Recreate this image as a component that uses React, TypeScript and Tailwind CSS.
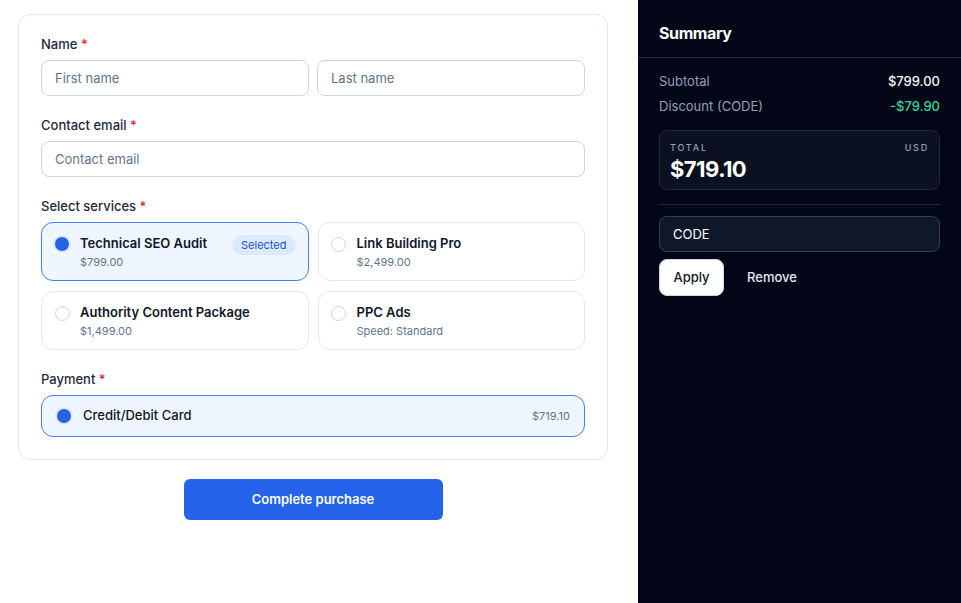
import { useState } from "react";

const SERVICES = [
  { id: "seo", name: "Technical SEO Audit", sub: "$799.00" },
  { id: "links", name: "Link Building Pro", sub: "$2,499.00" },
  { id: "content", name: "Authority Content Package", sub: "$1,499.00" },
  { id: "ppc", name: "PPC Ads", sub: "Speed: Standard" },
];

function Label({ children }: { children: React.ReactNode }) {
  return (
    <div className="text-[13px] font-medium text-[#1e293b] leading-5 mb-[6px]">
      {children} <span className="text-[#dc2626]">*</span>
    </div>
  );
}

function Radio({ on }: { on: boolean }) {
  return on ? (
    <span className="w-[18px] h-[18px] rounded-full bg-[#dbeafe] flex items-center justify-center shrink-0">
      <span className="w-[14px] h-[14px] rounded-full bg-[#2563eb]" />
    </span>
  ) : (
    <span className="w-[18px] h-[18px] flex items-center justify-center shrink-0">
      <span className="w-[15px] h-[15px] rounded-full border border-slate-300 bg-white" />
    </span>
  );
}

export default function App() {
  const [picked, setPicked] = useState("seo");

  return (
    <div className="flex w-[961px] h-[603px] bg-white" style={{ fontFamily: "Inter, 'Liberation Sans', sans-serif" }}>
      <div className="w-[638px] shrink-0 pl-[18px] pt-[14px]">
        <div className="w-[590px] border border-slate-200 rounded-xl px-[22px] pt-[19px] pb-[22px]">
          <Label>Name</Label>
          <div className="grid grid-cols-2 gap-2">
            <input
              placeholder="First name"
              className="h-[36px] rounded-lg border border-slate-300 px-[13px] text-[13px] text-slate-900 placeholder:text-slate-500 outline-none"
            />
            <input
              placeholder="Last name"
              className="h-[36px] rounded-lg border border-slate-300 px-[13px] text-[13px] text-slate-900 placeholder:text-slate-500 outline-none"
            />
          </div>

          <div className="mt-[19px]">
            <Label>Contact email</Label>
            <input
              placeholder="Contact email"
              className="w-full h-[36px] rounded-lg border border-slate-300 px-[13px] text-[13px] text-slate-900 placeholder:text-slate-500 outline-none"
            />
          </div>

          <div className="mt-[19px]">
            <Label>Select services</Label>
            <div className="grid grid-cols-2 gap-x-[9px] gap-y-[10px]">
              {SERVICES.map((s) => {
                const on = picked === s.id;
                return (
                  <button
                    key={s.id}
                    onClick={() => setPicked(s.id)}
                    className={`h-[59px] rounded-xl border text-left flex items-start gap-[9px] pl-[11px] pr-[12px] pt-[10px] ${
                      on ? "border-[#3b82f6] bg-[#eff6ff]" : "border-slate-200 bg-white"
                    }`}
                  >
                    <span className="mt-[2px]">
                      <Radio on={on} />
                    </span>
                    <span className="flex-1 min-w-0">
                      <span className="block text-[13px] font-semibold text-slate-900 leading-5">{s.name}</span>
                      <span className="block text-[11px] text-slate-500 leading-4 mt-[1px]">{s.sub}</span>
                    </span>
                    {on && (
                      <span className="mt-[2px] rounded-full bg-[#dbeafe] text-[#1d4ed8] text-[11px] leading-4 px-[9px] py-[2px]">
                        Selected
                      </span>
                    )}
                  </button>
                );
              })}
            </div>
          </div>

          <div className="mt-[19px]">
            <Label>Payment</Label>
            <div className="h-[42px] rounded-xl border border-[#3b82f6] bg-[#eff6ff] flex items-center pl-[13px] pr-[14px]">
              <Radio on />
              <span className="ml-[10px] text-[13px] font-medium text-slate-900">Credit/Debit Card</span>
              <span className="ml-auto text-[11px] text-slate-500">$719.10</span>
            </div>
          </div>
        </div>

        <div className="w-[590px] flex justify-center mt-[19px]">
          <button className="w-[259px] h-[41px] rounded-md bg-[#2563eb] text-white text-[13px] font-semibold">
            Complete purchase
          </button>
        </div>
      </div>

      <aside className="flex-1 bg-[#020617] text-white">
        <div className="h-[58px] border-b border-slate-800 px-[21px] pt-[23px]">
          <h2 className="text-[16px] font-bold tracking-tight leading-5">Summary</h2>
        </div>
        <div className="px-[21px] pt-[13px]">
          <div className="flex justify-between text-[13px] leading-5">
            <span className="text-slate-400">Subtotal</span>
            <span className="text-slate-100 font-medium">$799.00</span>
          </div>
          <div className="flex justify-between text-[13px] leading-5 mt-[5px]">
            <span className="text-slate-400">Discount (CODE)</span>
            <span className="text-[#34d399] font-medium">-$79.90</span>
          </div>

          <div className="mt-[14px] h-[60px] rounded-lg border border-slate-800 bg-[#0b1120] px-[10px] pt-[11px]">
            <div className="flex justify-between text-[9px] leading-3 tracking-[0.2em] text-slate-400 font-medium">
              <span>TOTAL</span>
              <span>USD</span>
            </div>
            <div className="text-[22px] font-bold leading-7 tracking-tight mt-[1px]">$719.10</div>
          </div>

          <div className="border-t border-slate-800 mt-[14px]" />

          <input
            defaultValue="CODE"
            className="mt-[11px] w-full h-[36px] rounded-lg border border-slate-700 bg-[#0f172a] px-[13px] text-[13px] text-white outline-none"
          />
          <div className="flex items-center mt-[7px] gap-[8px]">
            <button className="w-[65px] h-[37px] rounded-lg bg-white text-slate-900 text-[13px] font-medium border border-slate-300">
              Apply
            </button>
            <button className="px-[15px] h-[37px] text-[13px] font-medium text-slate-200">Remove</button>
          </div>
        </div>
      </aside>
    </div>
  );
}
